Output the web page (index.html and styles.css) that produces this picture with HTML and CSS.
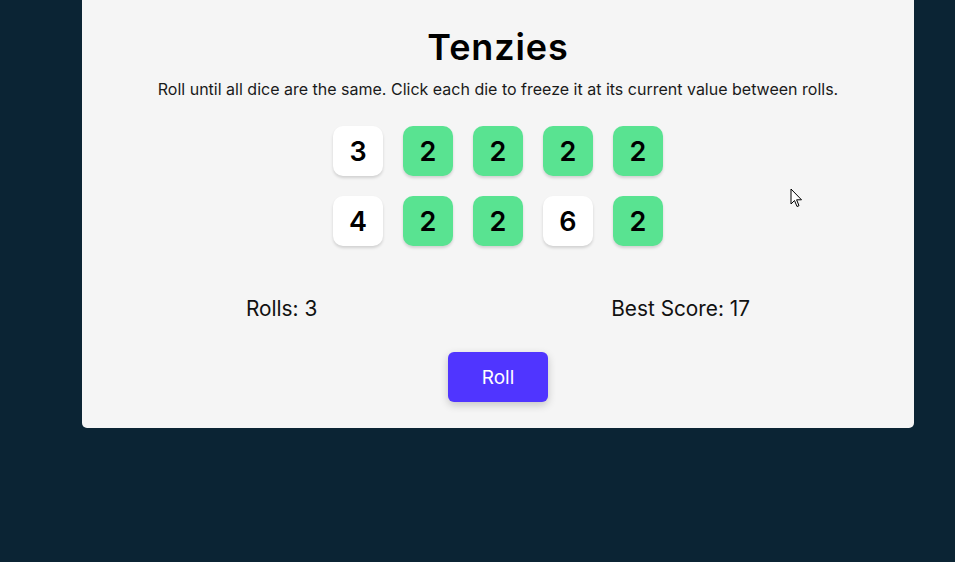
FILE: index.html
```html
<!DOCTYPE html>
<html>
<head>
<meta charset="utf-8">
<link rel="stylesheet" href="styles.css">
</head>
<body>
<main class="card">
  <h1 class="title">Tenzies</h1>
  <p class="instructions">Roll until all dice are the same. Click each die to freeze it at its current value between rolls.</p>
  <div class="dice">
    <div class="die">3</div>
    <div class="die held">2</div>
    <div class="die held">2</div>
    <div class="die held">2</div>
    <div class="die held">2</div>
    <div class="die">4</div>
    <div class="die held">2</div>
    <div class="die held">2</div>
    <div class="die">6</div>
    <div class="die held">2</div>
  </div>
  <div class="stats">
    <span>Rolls: 3</span>
    <span>Best Score: 17</span>
  </div>
  <button class="roll">Roll</button>
</main>
<svg class="cursor" width="14" height="22" viewBox="0 0 14 22">
  <path d="M1 1 L1 16 L4.5 12.5 L7 18.5 L9 17.7 L6.6 11.8 L11.5 11.8 Z" fill="#fff" stroke="#000" stroke-width="1" stroke-linejoin="round"/>
</svg>
</body>
</html>
```
FILE: styles.css
```css
html, body {
  margin: 0;
  padding: 0;
  background: #0B2434;
  height: 100%;
}
body {
  font-family: Inter, "Noto Sans", sans-serif;
  position: relative;
}
.card {
  box-sizing: border-box;
  margin-left: 82px;
  width: 832px;
  height: 428px;
  background: #F5F5F5;
  border-radius: 0 0 5px 5px;
  display: flex;
  flex-direction: column;
  align-items: center;
  padding-top: 23px;
}
.title {
  margin: 0;
  font-size: 36px;
  font-weight: 600;
  letter-spacing: 0.9px;
  line-height: 48px;
  color: #000;
}
.instructions {
  margin: 8px 0 0;
  font-size: 16px;
  line-height: 20px;
  color: #1a1a1a;
}
.dice {
  margin-top: 27px;
  display: grid;
  grid-template-columns: repeat(5, 50px);
  grid-auto-rows: 50px;
  gap: 20px;
}
.die {
  background: #fff;
  border-radius: 10px;
  box-shadow: 0 2px 3px rgba(0,0,0,0.15);
  display: flex;
  align-items: center;
  justify-content: center;
  font-family: Inter, sans-serif;
  font-weight: 600;
  font-size: 27px;
  color: #000;
}
.die.held {
  background: #59E391;
}
.stats {
  margin-top: 49px;
  width: 504px;
  display: flex;
  justify-content: space-between;
  font-size: 20.8px;
  font-weight: 400;
  line-height: 28px;
  color: #111;
}
.roll {
  margin-top: 29px;
  width: 100px;
  height: 50px;
  border: none;
  border-radius: 6px;
  background: #5035FF;
  color: #fff;
  font-family: Inter, sans-serif;
  font-size: 19px;
  box-shadow: 0 3px 8px rgba(0,0,0,0.2);
}
.cursor {
  position: absolute;
  left: 790px;
  top: 188px;
}
```
